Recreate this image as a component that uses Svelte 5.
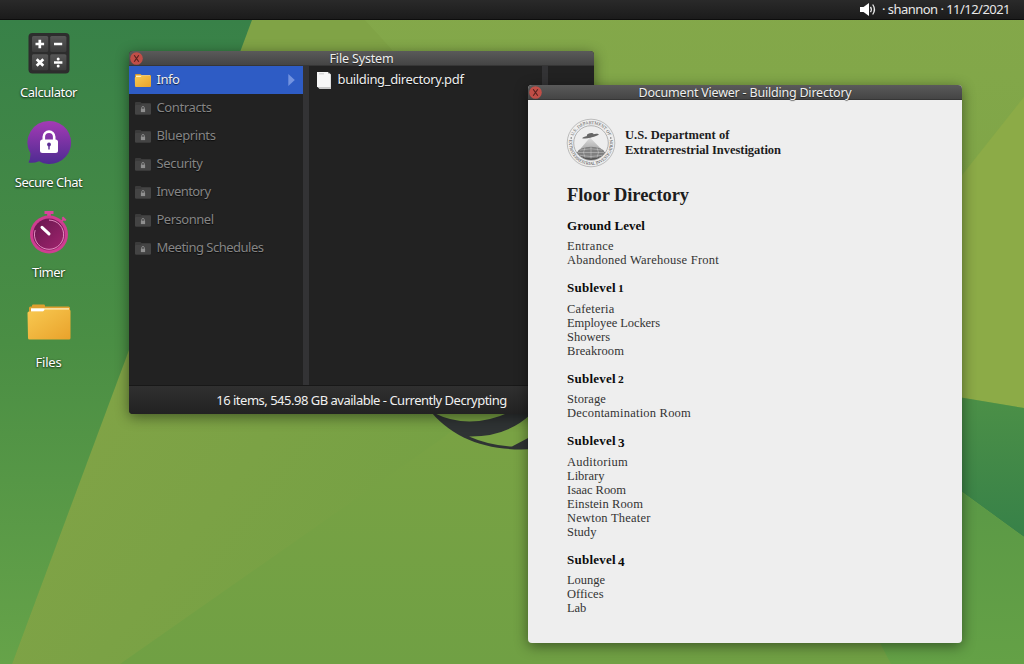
<script>
  // Spreads or tightens the letters so that a label takes up a given width.
  function fit(node, width) {
    const natural = node.getBoundingClientRect().width;
    node.style.letterSpacing = `${(width - natural) / node.textContent.length}px`;
  }

  const folders = [
    ['Contracts', 55],
    ['Blueprints', 59],
    ['Security', 46],
    ['Inventory', 54],
    ['Personnel', 57],
    ['Meeting Schedules', 107]
  ];

  const levels = [
    { name: 'Ground Level', w: 78, rooms: [['Entrance', 47], ['Abandoned Warehouse Front', 152]] },
    { name: 'Sublevel', n: '1', w: 49, rooms: [['Cafeteria', 47.5], ['Employee Lockers', 93], ['Showers', 43], ['Breakroom', 57]] },
    { name: 'Sublevel', n: '2', w: 49, rooms: [['Storage', 39], ['Decontamination Room', 124]] },
    { name: 'Sublevel', n: '3', w: 49, rooms: [['Auditorium', 61], ['Library', 37.5], ['Isaac Room', 59], ['Einstein Room', 76], ['Newton Theater', 83.5], ['Study', 29.5]] },
    { name: 'Sublevel', n: '4', w: 49, rooms: [['Lounge', 38], ['Offices', 36.5], ['Lab', 19]] }
  ];
</script>

<div class="desktop">
  <svg class="wallpaper" viewBox="0 0 1024 664" aria-hidden="true">
    <defs>
      <linearGradient id="base" x1="0" y1="0" x2="0" y2="1">
        <stop offset="0" stop-color="#84a84a" />
        <stop offset=".65" stop-color="#79a244" />
        <stop offset="1" stop-color="#70a044" />
      </linearGradient>
      <linearGradient id="left" x1="0" y1="0" x2="0" y2="1">
        <stop offset="0" stop-color="#388148" />
        <stop offset=".5" stop-color="#4a8e44" />
        <stop offset="1" stop-color="#66a349" />
      </linearGradient>
      <linearGradient id="right" x1="0" y1="0" x2="0" y2="1">
        <stop offset="0" stop-color="#4c9047" />
        <stop offset="1" stop-color="#378148" />
      </linearGradient>
      <linearGradient id="corner" x1="0" y1="0" x2="0" y2="1">
        <stop offset="0" stop-color="#5a9846" />
        <stop offset="1" stop-color="#64a146" />
      </linearGradient>
      <linearGradient id="glow" gradientUnits="userSpaceOnUse" x1="120" y1="380" x2="360" y2="560">
        <stop offset="0" stop-color="#80a346" />
        <stop offset="1" stop-color="#76a144" />
      </linearGradient>
    </defs>
    <rect width="1024" height="664" fill="url(#base)" />
    <path d="M252 20H365L620 300 440 440 120 664H12z" fill="url(#glow)" />
    <path d="M1024 97 940 203V394L1024 408z" fill="#8cab47" />
    <path d="M940 394 1024 408V537L940 476z" fill="url(#right)" />
    <path d="M940 476 1024 537V664H891L868 620z" fill="url(#corner)" />
    <path d="M0 20H252L12 664H0z" fill="url(#left)" />
    <path d="M428 408C452 440 490 452 534 449V408z" fill="#2f3334" />
    <path d="M434 413Q470 431 512 411L500 405H430z" fill="#79a244" />
    <path d="M469 436.500Q506 437 530 415V437L512 446.500Q489 445.500 469 436.500z" fill="#79a244" />
  </svg>

  <header class="menubar">
    <svg width="18" height="15" viewBox="0 0 18 15">
      <path d="M1 5h3.500L10 1v13L4.500 10H1z" fill="#fff" />
      <path d="M11.500 4.800Q13.200 7.500 11.500 10.200M13.700 2.500Q17.200 7.500 13.700 12.500" fill="none" stroke="#e8e8e8" stroke-width="1.300" />
    </svg>
    <span use:fit={128}>· shannon · 11/12/2021</span>
  </header>

  <nav class="launchers">
    <div class="launcher">
      <svg width="48" height="48" viewBox="0 0 48 48">
        <defs>
          <linearGradient id="key" x1="0" y1="0" x2="0" y2="1">
            <stop offset="0" stop-color="#565656" /><stop offset="1" stop-color="#3c3c3c" />
          </linearGradient>
        </defs>
        <rect x="3.500" y="4" width="41" height="40.500" rx="4" fill="#2d2d2d" />
        <g fill="url(#key)">
          <rect x="7" y="7" width="16.200" height="16" rx="1.500" /><rect x="25.200" y="7" width="16.200" height="16" rx="1.500" />
          <rect x="7" y="25.200" width="16.200" height="16" rx="1.500" /><rect x="25.200" y="25.200" width="16.200" height="16" rx="1.500" />
        </g>
        <g stroke="#fff" stroke-width="2.700" fill="none">
          <path d="M10.500 15h8.600M14.800 10.700v8.600M29 15h8.200M11.700 30.200l6.600 6.600M18.300 30.200l-6.600 6.600M29 33.500h8.400" />
        </g>
        <circle cx="33.200" cy="30" r="1.500" fill="#fff" /><circle cx="33.200" cy="37" r="1.500" fill="#fff" />
      </svg>
      <span use:fit={57}>Calculator</span>
    </div>
    <div class="launcher">
      <svg width="48" height="48" viewBox="0 0 48 48">
        <defs>
          <linearGradient id="chat" x1="0" y1="0" x2="0" y2="1">
            <stop offset="0" stop-color="#a43bb5" /><stop offset="1" stop-color="#4d2b91" />
          </linearGradient>
        </defs>
        <path d="M24.500 2a21.500 21.500 0 1 1-10.500 40.200Q9 44.300 3.500 43.500 5.600 40 5.400 34.200A21.500 21.500 0 0 1 24.500 2z" fill="url(#chat)" />
        <path d="M18.800 22v-4.200a5.200 5.200 0 0 1 10.400 0V22" fill="none" stroke="#fff" stroke-width="2.600" />
        <rect x="15" y="20.500" width="18" height="13.500" rx="2.500" fill="#fff" />
        <circle cx="24" cy="25.500" r="1.900" fill="#5b2c94" /><path d="M23.300 26h1.400v4.500h-1.400z" fill="#5b2c94" />
      </svg>
      <span use:fit={67.5}>Secure Chat</span>
    </div>
    <div class="launcher">
      <svg width="48" height="48" viewBox="0 0 48 48">
        <defs>
          <linearGradient id="dial" x1="0" y1="0" x2="1" y2="1">
            <stop offset="0" stop-color="#65164d" /><stop offset="1" stop-color="#a3246f" />
          </linearGradient>
        </defs>
        <g fill="#d9459b">
          <path d="M19.500 2h9v3h-2.700v5h-3.600V5h-2.700z" />
          <path d="M35 12.500l2.600-2.600-1-1 1.500-1.500 3.400 3.400-1.500 1.500-1-1-2.500 2.500z" />
        </g>
        <circle cx="24" cy="25.500" r="19" fill="#cf3d91" />
        <circle cx="24" cy="25.500" r="16" fill="url(#dial)" />
        <path d="M24 11.100a14.600 14.600 0 1 1-13.800 10" fill="none" stroke="#e38dc1" stroke-width="1" />
        <path d="M17 18.300l7 6.600" stroke="#fff" stroke-width="3" stroke-linecap="round" />
      </svg>
      <span use:fit={33}>Timer</span>
    </div>
    <div class="launcher">
      <svg width="48" height="48" viewBox="0 0 48 48">
        <defs>
          <linearGradient id="folder" x1="0" y1="0" x2="1" y2="1">
            <stop offset="0" stop-color="#f8c951" /><stop offset="1" stop-color="#e9a22b" />
          </linearGradient>
        </defs>
        <path d="M4 9q0-1.500 1.500-1.500H7V6.700Q7 5.500 8.200 5.500h10.600Q20 5.500 20 6.700v.8h23.500q1.500 0 1.500 1.500V16H4z" fill="#dfa030" />
        <path d="M6 9.200h38v3H6z" fill="#fff2c0" /><path d="M6 9.700h13v3H6z" fill="#fff" />
        <path d="M2.500 14Q2.500 12.500 4 12.500h14l2-2h24q1.500 0 1.500 1.500v27q0 1.500-1.500 1.500H4.500Q3 40.500 3 39z" fill="url(#folder)" />
      </svg>
      <span use:fit={26}>Files</span>
    </div>
  </nav>

  <section class="window files">
    <div class="titlebar">
      <svg class="close" width="13" height="13" viewBox="0 0 13 13"><circle cx="6.500" cy="6.500" r="6.300" fill="#c04e47" /><path d="M4.200 3.200l4.600 6.600M8.800 3.200L4.200 9.800" stroke="#54201d" stroke-width="1.100" /></svg>
      <span use:fit={64}>File System</span>
    </div>
    <div class="columns">
      <div class="column list">
        <div class="row selected">
          <svg width="18" height="16" viewBox="0 0 18 16">
            <path d="M1 3Q1 2 2 2h4.500l1 1H16q1 0 1 1v3H1z" fill="#d99a2c" /><path d="M2 3.500h14v2H2z" fill="#fff0bd" />
            <path d="M.8 6q0-1 1-1H6.500l1-1H16q1 0 1 1v9q0 1-1 1H2q-1 0-1-1z" fill="url(#folder)" />
          </svg>
          <span use:fit={23}>Info</span>
          <svg class="arrow" width="7" height="12" viewBox="0 0 7 12"><path d="M.3 0L6.800 6 .3 12z" fill="#7393e0" /></svg>
        </div>
        {#each folders as [name, w]}
          <div class="row locked">
            <svg width="18" height="16" viewBox="0 0 18 16">
              <path d="M1 3q0-1 1-1h4.500l1 1H16q1 0 1 1v9.500q0 1-1 1H2q-1 0-1-1z" fill="#3b3b3b" />
              <path d="M1 6q0-1 1-1h5l1-1h8q1 0 1 1v8.500q0 1-1 1H2q-1 0-1-1z" fill="#444" />
              <path d="M7.700 9V7.800a1.300 1.300 0 0 1 2.600 0V9" fill="none" stroke="#909090" stroke-width=".9" /><path d="M6.900 8.700h4.200v3.400H6.900z" fill="#909090" />
            </svg>
            <span use:fit={w}>{name}</span>
          </div>
        {/each}
      </div>
      <div class="column wide">
        <div class="row file">
          <svg width="18" height="20" viewBox="0 0 18 20">
            <path d="M2.500 2.500H14l2 2V19H4.500l-2-2z" fill="#c9c9c9" /><path d="M2 2h11v2h2.500v13H2z" fill="#f7f7f7" /><path d="M4 3.800h5" stroke="#bbb" stroke-width=".7" />
          </svg>
          <span use:fit={126}>building_directory.pdf</span>
        </div>
      </div>
      <div class="column rest"></div>
    </div>
    <footer><span use:fit={290.5}>16 items, 545.98 GB available - Currently Decrypting</span></footer>
  </section>

  <section class="window viewer">
    <div class="titlebar">
      <svg class="close" width="13" height="13" viewBox="0 0 13 13"><circle cx="6.500" cy="6.500" r="6.300" fill="#c04e47" /><path d="M4.200 3.200l4.600 6.600M8.800 3.200L4.200 9.800" stroke="#54201d" stroke-width="1.100" /></svg>
      <span use:fit={213}>Document Viewer - Building Directory</span>
    </div>
    <article>
      <div class="letterhead">
        <svg width="50" height="50" viewBox="0 0 50 50">
          <defs>
            <path id="arc-top" d="M6.800 30.500A19 19 0 1 1 43.200 30.500" />
            <path id="arc-bottom" d="M3.900 19.300A21.900 21.900 0 1 0 46.100 19.300" />
            <clipPath id="disc"><circle cx="25" cy="25" r="17" /></clipPath>
            <linearGradient id="beam" x1="0" y1="0" x2="0" y2="1"><stop offset="0" stop-color="#ddd" /><stop offset="1" stop-color="#999" /></linearGradient>
          </defs>
          <circle cx="25" cy="25" r="23.800" fill="none" stroke="#999" stroke-width=".6" />
          <circle cx="25" cy="25" r="17.300" fill="none" stroke="#888" stroke-width=".6" />
          <g clip-path="url(#disc)">
            <path d="M8 34h34v12H8z" fill="#555" />
            <path d="M24 19.500L10 36h30z" fill="url(#beam)" />
            <ellipse cx="25" cy="34.500" rx="13.500" ry="5.800" fill="#808080" />
            <path d="M12 34.500h26M14 32q11-2.500 22 0M14 37.300q11 2.500 22 0M25 28.500v12M19 29.500q-3 5 0 10M31 29.500q3 5 0 10" fill="none" stroke="#ccc" stroke-width=".5" />
          </g>
          <g transform="rotate(-14 24.500 18)" fill="#666"><ellipse cx="24.500" cy="18.200" rx="8.500" ry="1.300" /><ellipse cx="24.500" cy="17.200" rx="3.500" ry="2" /></g>
          <g class="seal">
            <text><textPath href="#arc-top" startOffset="50%" text-anchor="middle" textLength="45">U.S. DEPARTMENT OF</textPath></text>
            <text><textPath href="#arc-bottom" startOffset="50%" text-anchor="middle" textLength="76">EXTRATERRESTRIAL INVESTIGATION</textPath></text>
          </g>
          <circle cx="5.200" cy="20" r=".7" fill="#555" /><circle cx="44.800" cy="20" r=".7" fill="#555" />
        </svg>
        <div class="agency">
          <div><span use:fit={104.5}>U.S. Department of</span></div>
          <div><span use:fit={156}>Extraterrestrial Investigation</span></div>
        </div>
      </div>
      <h1><span use:fit={122}>Floor Directory</span></h1>
      {#each levels as level}
        <h2><span use:fit={level.w}>{level.name}</span>{#if level.n}<span class="digit" class:low={level.n > '2'}>{level.n}</span>{/if}</h2>
        <ul>
          {#each level.rooms as [room, w]}
            <li><span use:fit={w}>{room}</span></li>
          {/each}
        </ul>
      {/each}
    </article>
  </section>
</div>

<style>
  :global(body) { margin: 0; overflow: hidden; }
  .desktop {
    position: relative;
    width: 1024px;
    height: 664px;
    overflow: hidden;
    font: 13px/18px "Noto Sans", sans-serif;
    color: #fff;
  }
  svg { display: block; flex: none; }
  span { white-space: nowrap; }
  .wallpaper { position: absolute; inset: 0; width: 1024px; height: 664px; }
  .menubar {
    position: relative;
    display: flex;
    justify-content: flex-end;
    align-items: center;
    gap: 5px;
    box-sizing: border-box;
    height: 20px;
    padding: 0 14px 1px 0;
    background: linear-gradient(#2a2a2a, #1b1b1b);
    border-bottom: 1px solid #0d0d0d;
    color: #e8e8e8;
  }
  .launchers {
    position: relative;
    display: flex;
    flex-direction: column;
    gap: 18px;
    width: 97px;
    padding-top: 9px;
  }
  .launcher {
    display: flex;
    flex-direction: column;
    align-items: center;
    gap: 6px;
    height: 72px;
    text-shadow: 0 1px 2px #000a, 0 0 2px #0006;
  }
  .window {
    position: absolute;
    display: flex;
    flex-direction: column;
    border-radius: 4px;
    box-shadow: 0 3px 14px #0007;
  }
  .titlebar {
    position: relative;
    z-index: 1;
    flex: none;
    display: flex;
    justify-content: center;
    align-items: flex-start;
    box-sizing: border-box;
    height: 15px;
    border-radius: 4px 4px 0 0;
    background: linear-gradient(#5a5a5a, #454545);
    border-bottom: 1px solid #363636;
    color: #eee;
    font-size: 12.5px;
    line-height: 16px;
    text-shadow: 0 1px 1px #0008;
  }
  .close { position: absolute; left: 1px; top: 1px; }
  .files { left: 129px; top: 51px; width: 465px; height: 363px; background: #222; }
  .viewer { left: 528px; top: 85px; width: 434px; height: 558px; background: #eee; }
  .columns { flex: 1; display: flex; }
  .column { box-sizing: border-box; }
  .list { width: 180px; border-right: 6px solid #333335; }
  .wide { width: 239px; border-right: 6px solid #333335; }
  .rest { flex: 1; }
  .row {
    display: flex;
    align-items: center;
    gap: 4.5px;
    box-sizing: border-box;
    height: 28px;
    padding: 0 8px 2px 5px;
    color: #eee;
    text-shadow: 0 1px 1px #000a;
  }
  .row svg { margin-top: 1px; }
  .file { padding-left: 6px; }
  .selected { background: #2e5cc5; }
  .locked { color: #858585; }
  .arrow { margin-left: auto; }
  footer {
    box-sizing: border-box;
    height: 29px;
    padding-top: 5px;
    border-top: 1px solid #181818;
    border-radius: 0 0 4px 4px;
    background: linear-gradient(#303030, #222);
    text-align: center;
    color: #f0f0f0;
  }
  article {
    padding: 17px 38px 0;
    font-family: "Liberation Serif", serif;
    color: #1d1d1d;
  }
  .letterhead { display: flex; gap: 9px; align-items: center; height: 52px; }
  .agency { font-weight: bold; font-size: 12.5px; line-height: 15px; }
  .seal { font: 4.600px "Liberation Serif", serif; fill: #555; }
  h1, h2, ul { margin: 0 0 0 1px; padding: 0; list-style: none; }
  h1 { margin-top: 14px; font-size: 18.5px; line-height: 24px; height: 32.5px; }
  h2 { font-size: 13px; line-height: 20px; height: 20px; margin-bottom: 3.5px; color: #0b0b0b; }
  ul { font-size: 12.500px; line-height: 14px; margin-bottom: 11px; color: #333; }
  li { height: 14px; }
  .digit { display: inline-block; margin-left: 2px; font-size: 10px; line-height: 10px; transform: scaleX(1.15); transform-origin: left; }
  .low { font-size: 11.5px; vertical-align: -2px; }
</style>
